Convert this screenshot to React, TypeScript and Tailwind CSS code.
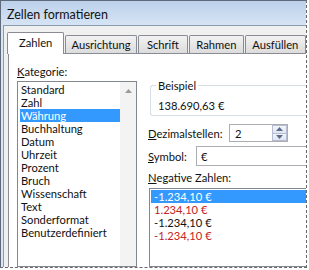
import React from 'react';

const kategorien = [
  'Standard',
  'Zahl',
  'Währung',
  'Buchhaltung',
  'Datum',
  'Uhrzeit',
  'Prozent',
  'Bruch',
  'Wissenschaft',
  'Text',
  'Sonderformat',
  'Benutzerdefiniert',
];

const negativ = [
  { text: '-1.234,10 €', red: false },
  { text: '1.234,10 €', red: true },
  { text: '-1.234,10 €', red: false },
  { text: '-1.234,10 €', red: true },
];

const tabs = [
  { label: 'Zahlen', w: 'w-[58px]' },
  { label: 'Ausrichtung', w: 'w-[72px]' },
  { label: 'Schrift', w: 'w-[51px]' },
  { label: 'Rahmen', w: 'w-[55px]' },
  { label: 'Ausfüllen', w: 'w-[62px]' },
];

const Arrow: React.FC<{ up?: boolean }> = ({ up }) => (
  <svg width="7" height="4" viewBox="0 0 7 4">
    <path d={up ? 'M0 4 L3.5 0 L7 4 Z' : 'M0 0 L3.5 4 L7 0 Z'} fill="#5a6d8f" />
  </svg>
);

export default function App() {
  return (
    <div className="w-[309px] h-[270px] bg-white overflow-hidden text-[11.2px] leading-[13px] text-[#111]" style={{ fontFamily: 'Lato, "Noto Sans", sans-serif' }}>
      <div className="w-[307px] h-[268px] border-r border-b border-dashed border-[#6a6a6a] overflow-hidden">
        <div className="h-full flex flex-col border-t border-l border-[#5f6b7a] bg-[#d8e5f4]">
          {/* title bar */}
          <div className="h-[24px] shrink-0 flex items-center pl-[6px] pt-[3px] bg-gradient-to-b from-[#bcd1eb] to-[#d6e4f4] text-[12.5px]">
            Zellen formatieren
          </div>
          {/* body */}
          <div className="flex-1 flex flex-col ml-[2px] border-l border-t border-[#8a9bb0] bg-[#f0f0f0] pl-[4px] pt-[6px]">
            <div className="flex items-end h-[21px] -ml-[1px] relative z-10">
              {tabs.map((t, i) =>
                i === 0 ? (
                  <div key={t.label} className={`${t.w} h-[22px] -mb-[1px] bg-white border border-b-0 border-[#898c95] rounded-t-[2px] flex items-center justify-center pb-[2px]`}>
                    {t.label}
                  </div>
                ) : (
                  <div key={t.label} className={`${t.w} h-[18px] ml-[1px] border border-b-0 border-[#898c95] rounded-t-[2px] bg-gradient-to-b from-[#f2f2f2] to-[#dcdcdc] flex items-center justify-center`}>
                    {t.label}
                  </div>
                )
              )}
            </div>
            {/* panel */}
            <div className="flex-1 border-t border-l border-[#898c95] bg-white flex pl-[8px] pt-[11px]">
              {/* left column */}
              <div className="w-[120px] shrink-0 flex flex-col">
                <div className="h-[15px]"><span className="underline">K</span>ategorie:</div>
                <div className="flex-1 mt-[1px] border border-[#828790] flex">
                  <div className="flex-1 pt-[1px] pl-[2px]">
                    {kategorien.map(k => (
                      <div key={k} className={`h-[13px] pl-[1px] ${k === 'Währung' ? 'bg-[#3399ff] text-white' : ''}`}>{k}</div>
                    ))}
                  </div>
                  <div className="w-[16px] bg-[#f3f3f3] flex justify-center pt-[7px]">
                    <svg width="7" height="4" viewBox="0 0 7 4">
                      <path d="M0 4 L3.5 0 L7 4 Z" fill="#9a9a9a" />
                    </svg>
                  </div>
                </div>
              </div>
              {/* right column */}
              <div className="flex-1 flex flex-col ml-[11px] pt-[20px]">
                <div className="relative ml-[2px] h-[31px] border border-r-0 border-[#d5dfe5] rounded-l-[3px] pl-[7px] pt-[13px]">
                  <span className="absolute -top-[7px] left-[5px] bg-white px-[2px]">Beispiel</span>
                  138.690,63 €
                </div>
                <div className="flex items-center mt-[8px] h-[18px]">
                  <span className="w-[81px]"><span className="underline">D</span>ezimalstellen:</span>
                  <div className="w-[59px] h-[18px] border border-[#abadb3] flex items-center">
                    <span className="flex-1 pl-[5px]">2</span>
                    <div className="w-[15px] h-full flex flex-col">
                      <div className="flex-1 flex items-center justify-center border border-[#b6bdd2] bg-gradient-to-b from-[#f4f6fb] to-[#dfe4ef]"><Arrow up /></div>
                      <div className="flex-1 flex items-center justify-center border border-t-0 border-[#b6bdd2] bg-gradient-to-b from-[#f4f6fb] to-[#dfe4ef]"><Arrow /></div>
                    </div>
                  </div>
                </div>
                <div className="flex items-center mt-[4px] h-[20px]">
                  <span className="w-[48px]"><span className="underline">S</span>ymbol:</span>
                  <div className="flex-1 h-[20px] border border-r-0 border-[#abadb3] flex items-center pl-[4px]">€</div>
                </div>
                <div className="mt-[3px] h-[16px] flex items-center"><span className="underline">N</span>egative Zahlen:</div>
                <div className="flex-1 mt-[3px] ml-[1px] border border-r-0 border-[#828790] pt-[1px]">
                  {negativ.map((n, i) => (
                    <div key={i} className={`h-[13px] pl-[3px] ml-[1px] ${i === 0 ? 'bg-[#3399ff] text-white' : n.red ? 'text-[#c42424]' : ''}`}>{n.text}</div>
                  ))}
                </div>
              </div>
            </div>
          </div>
        </div>
      </div>
    </div>
  );
}
